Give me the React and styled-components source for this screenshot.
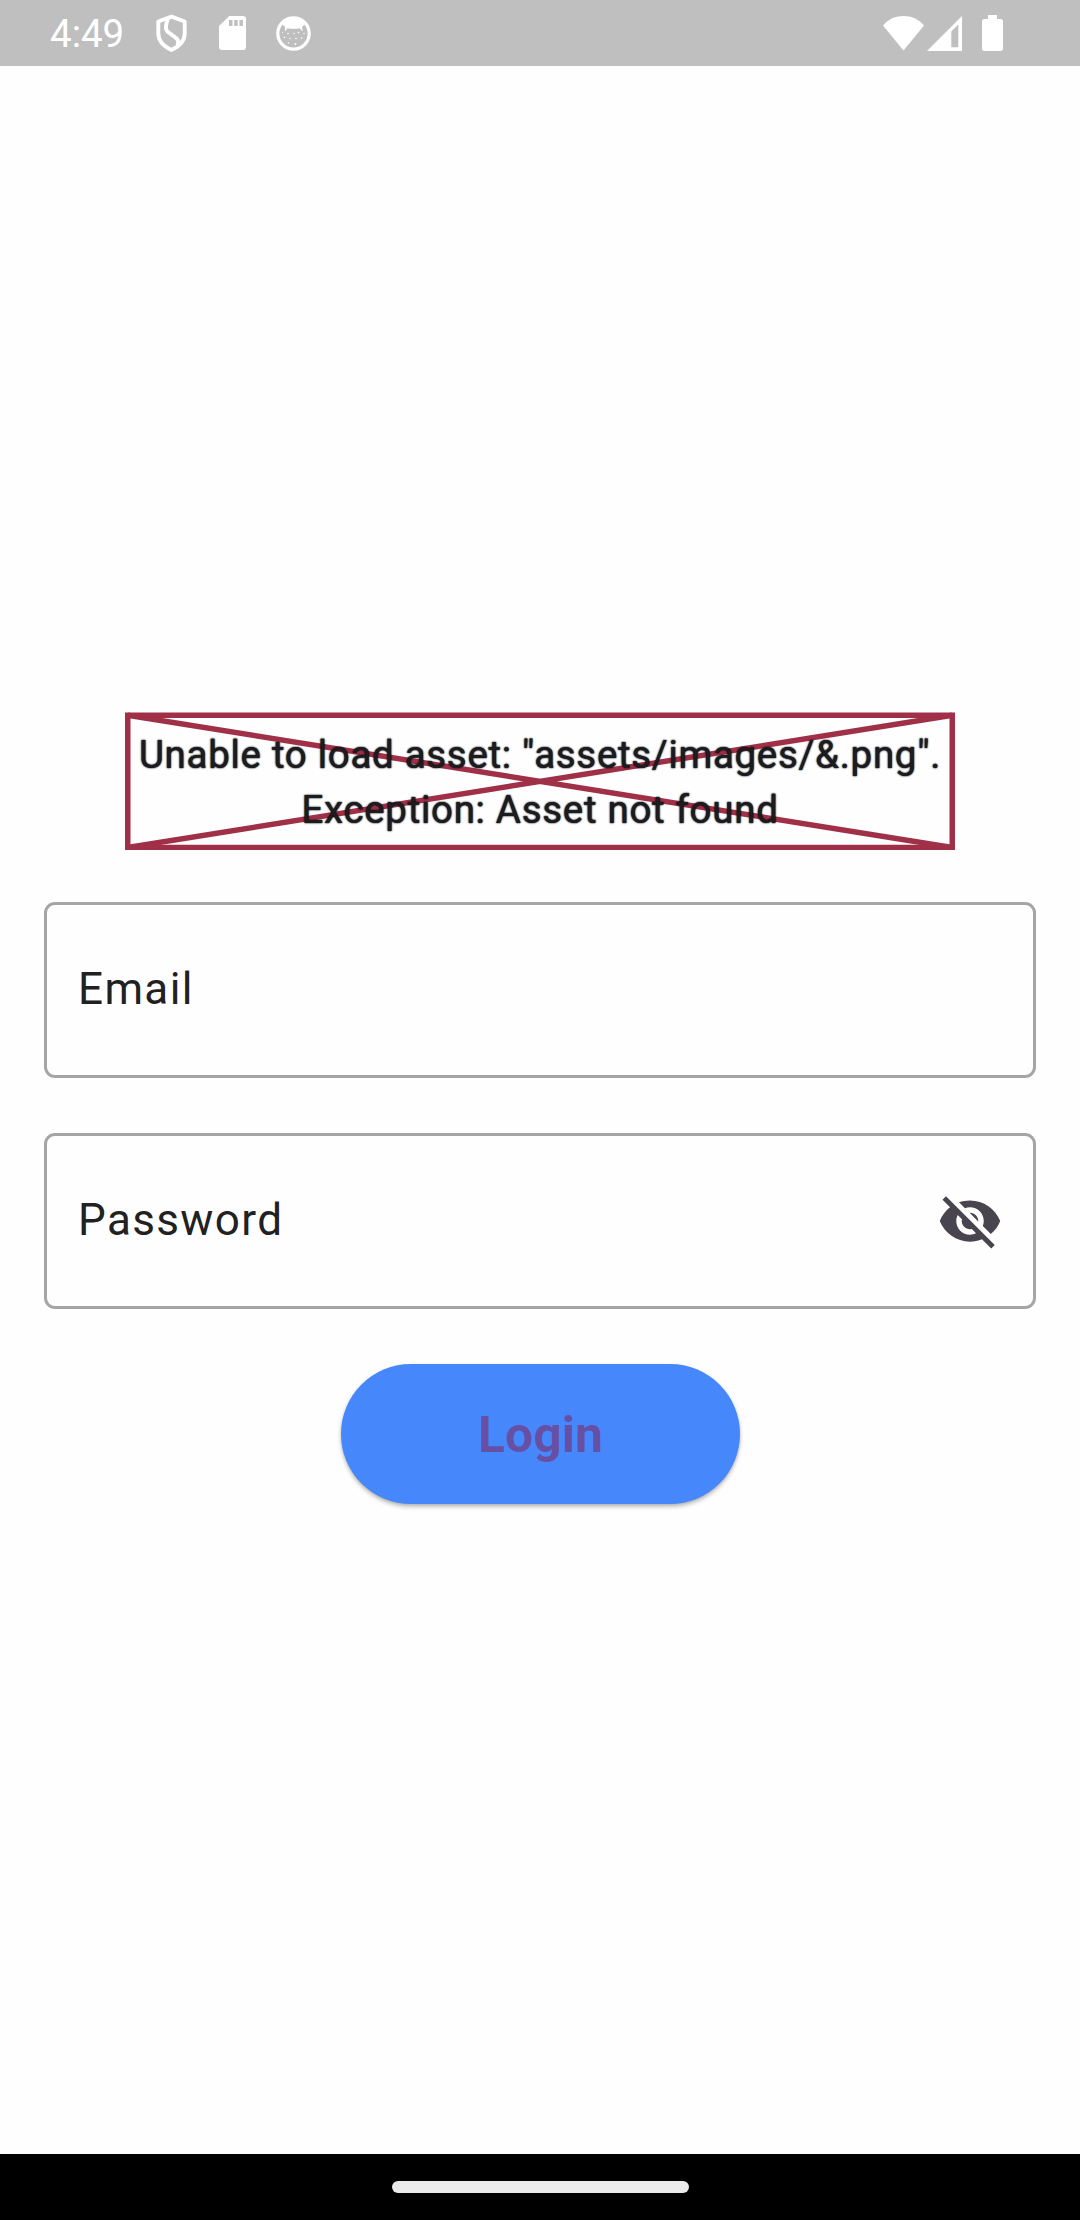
import React from "react";
import styled, { createGlobalStyle } from "styled-components";

const GlobalStyle = createGlobalStyle`
  *, *::before, *::after { box-sizing: border-box; }
  body { margin: 0; background: #fefefe; }
`;

const Screen = styled.div`
  display: flex;
  flex-direction: column;
  width: 1080px;
  height: 2220px;
  overflow: hidden;
  background: #fefefe;
  font-family: Roboto, "Noto Sans", sans-serif;
`;

const StatusBar = styled.header`
  display: flex;
  align-items: center;
  justify-content: space-between;
  height: 66px;
  padding: 0 77px 0 50px;
  background: #bfbfbf;
  color: #fff;
`;

const StatusGroup = styled.div`
  display: flex;
  align-items: center;
`;

const Clock = styled.time`
  font-size: 38.5px;
  line-height: 46px;
  width: 106px;
  padding-top: 2px;
`;

const Glyph = styled.svg`
  display: block;
  flex: none;
  width: ${(p) => p.$w}px;
  height: ${(p) => p.$h}px;
  margin-left: ${(p) => p.$gap || 0}px;
`;

const Content = styled.main`
  flex: 1;
  display: flex;
  flex-direction: column;
  align-items: center;
  padding: 646px 44px 0;
`;

const ErrorBox = styled.div`
  position: relative;
  width: 830px;
  height: 138px;
  padding-top: 15px;
`;

const Cross = styled.svg`
  position: absolute;
  inset: 0;
  width: 830px;
  height: 138px;
`;

const ErrorText = styled.p`
  position: relative;
  margin: 0;
  text-align: center;
  white-space: pre-line;
  font-size: 38.5px;
  font-weight: 400;
  line-height: 55px;
  letter-spacing: 0.69px;
  color: #1c1b1f;
  text-shadow: 0 0 2px #000, 0 0 1px rgba(0, 0, 0, 0.6);
`;

const Field = styled.label`
  display: flex;
  align-items: center;
  justify-content: space-between;
  width: 992px;
  height: 176px;
  margin-top: ${(p) => p.$gap}px;
  padding: 0 30px 0 31px;
  border: 3px solid #a5a5a5;
  border-radius: 11px;
  color: #212121;
  font-size: 44px;
  letter-spacing: 1.375px;
`;

const FieldLabel = styled.span`
  line-height: 66px;
  padding-bottom: 2px;
`;

const LoginButton = styled.button`
  width: 399px;
  height: 140.5px;
  margin-top: 54.5px;
  padding: 2px 0 0 1px;
  border: 0;
  border-radius: 71px;
  background: #4688fc;
  box-shadow: 0 3px 4px rgba(0, 0, 0, 0.22), 0 1px 3px rgba(0, 0, 0, 0.12);
  color: #6750a4;
  font: 700 49.5px/70px Roboto, sans-serif;
  letter-spacing: 0.28px;
`;

const NavBar = styled.footer`
  display: flex;
  justify-content: center;
  height: 66px;
  padding-top: 27px;
  background: #000;
`;

const HomePill = styled.div`
  width: 297px;
  height: 12px;
  border-radius: 6px;
  background: #ebebeb;
`;

const ShieldIcon = () => (
  <Glyph $w={31} $h={38} viewBox="0 0 31 38" fill="none" stroke="#fff" strokeWidth="3.9" strokeLinejoin="round">
    <path d="M15.5 2.700 28.700 7.500V19.500C28.700 26.500 23 32.500 15.500 36 8 32.500 2.300 26.500 2.300 19.500V7.500Z" />
    <path d="M12 4.500C7.500 17 11 17.500 16 21S23.500 25.500 21.500 31.500" />
  </Glyph>
);

const SdCardIcon = () => (
  <Glyph $w={27} $h={34} $gap={32} viewBox="0 0 27 34">
    <path fill="#fff" d="M10.300 0H24a3 3 0 0 1 3 3v28a3 3 0 0 1-3 3H3a3 3 0 0 1-3-3V10Z" />
    <path fill="#bfbfbf" d="M10 4h3.500v6H10zM15.200 4h3.500v6h-3.500zM20.400 4h3.500v6h-3.500z" />
  </Glyph>
);

const CatIcon = () => (
  <Glyph $w={35} $h={35} $gap={30} viewBox="0 0 35 35">
    <circle cx="17.500" cy="17.500" r="15.700" fill="none" stroke="#fff" strokeWidth="3.200" />
    <path fill="#fff" d="M4.500 8 17.500 1 30.500 8C28 9 26.500 10 26 11.500L26.800 15.500 23.500 12.200C20 13 15 13 11.500 12.200L8.800 15.500 9.300 11.500C9 10 7 9 4.500 8Z" />
    <g fill="#fff">
      <circle cx="6.500" cy="16.500" r=".6" />
      <circle cx="12" cy="17.500" r=".8" />
      <circle cx="18" cy="17.500" r=".7" />
      <circle cx="22.500" cy="16.500" r=".8" />
      <circle cx="28" cy="17.500" r=".7" />
      <circle cx="8.500" cy="21.500" r=".8" />
      <circle cx="14" cy="22.500" r=".7" />
      <circle cx="20" cy="22.500" r=".8" />
      <circle cx="25.500" cy="22" r=".8" />
      <circle cx="12.500" cy="27" r=".7" />
      <circle cx="19.500" cy="28" r=".9" />
    </g>
  </Glyph>
);

const WifiIcon = () => (
  <Glyph $w={41} $h={35} viewBox="0 0 41 35">
    <path fill="#fff" d="M0 9.500C5.500 3 12.500 0 20.500 0S35.500 3 41 9.500L20.500 34.500Z" />
  </Glyph>
);

const SignalIcon = () => (
  <Glyph $w={35} $h={35} $gap={3} viewBox="0 0 35 35">
    <path fill="#fff" fillRule="evenodd" d="M35 0V35H0ZM31.300 8.500 24.300 15.500V31.300H31.300Z" />
  </Glyph>
);

const BatteryIcon = () => (
  <Glyph $w={21} $h={36} $gap={20} viewBox="0 0 21 36">
    <path fill="#fff" d="M6 0h9v4h3.500A2.500 2.500 0 0 1 21 6.500v27a2.500 2.500 0 0 1-2.500 2.500h-16A2.500 2.500 0 0 1 0 33.500v-27A2.500 2.500 0 0 1 2.500 4H6Z" />
  </Glyph>
);

const VisibilityOffIcon = () => (
  <Glyph $w={66} $h={66} viewBox="0 0 24 24">
    <path
      fill="#49454f"
      d="M12 7c2.760 0 5 2.240 5 5 0 .65-.13 1.260-.36 1.830l2.920 2.920c1.510-1.260 2.700-2.890 3.430-4.750-1.730-4.390-6-7.500-11-7.500-1.400 0-2.740.25-3.980.7l2.160 2.160C10.740 7.130 11.350 7 12 7zM2 4.270l2.280 2.280.46.46C3.080 8.300 1.780 10.020 1 12c1.730 4.390 6 7.500 11 7.500 1.550 0 3.030-.3 4.380-.84l.42.42L19.730 22 21 20.730 3.270 3 2 4.270zM7.530 9.800l1.550 1.550c-.05.21-.08.43-.08.65 0 1.660 1.340 3 3 3 .22 0 .44-.03.65-.08l1.550 1.550c-.67.33-1.410.53-2.200.53-2.760 0-5-2.240-5-5 0-.79.2-1.530.53-2.200zm4.310-.78l3.150 3.150.02-.16c0-1.660-1.340-3-3-3l-.17.01z"
    />
  </Glyph>
);

export default function App() {
  return (
    <>
      <GlobalStyle />
      <Screen>
        <StatusBar>
          <StatusGroup>
            <Clock>4:49</Clock>
            <ShieldIcon />
            <SdCardIcon />
            <CatIcon />
          </StatusGroup>
          <StatusGroup>
            <WifiIcon />
            <SignalIcon />
            <BatteryIcon />
          </StatusGroup>
        </StatusBar>
        <Content>
          <ErrorBox>
            <Cross viewBox="0 0 830 138" fill="none" stroke="#a03048" strokeWidth="5.500">
              <rect x="2.750" y="3.250" width="824.500" height="132.250" />
              <path d="M2.750 3.250 827.250 135.500M827.250 3.250 2.750 135.500" />
            </Cross>
            <ErrorText>{'Unable to load asset: "assets/images/&.png".\nException: Asset not found'}</ErrorText>
          </ErrorBox>
          <Field $gap={52}>
            <FieldLabel>Email</FieldLabel>
          </Field>
          <Field $gap={55}>
            <FieldLabel>Password</FieldLabel>
            <VisibilityOffIcon />
          </Field>
          <LoginButton>Login</LoginButton>
        </Content>
        <NavBar>
          <HomePill />
        </NavBar>
      </Screen>
    </>
  );
}
